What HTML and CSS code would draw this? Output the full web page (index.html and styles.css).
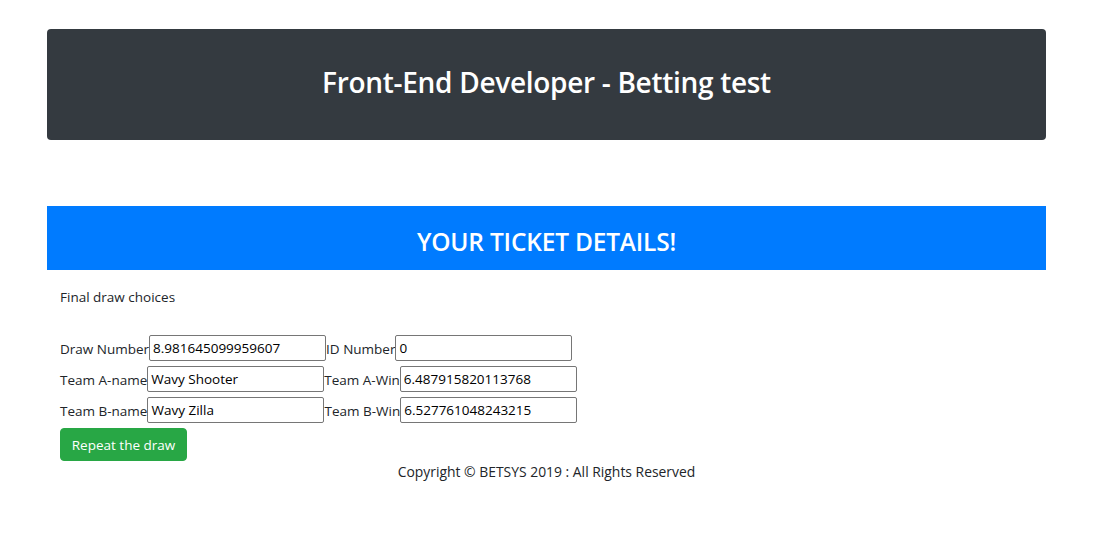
FILE: index.html
```html
<!DOCTYPE html>
<html>
<head>
<meta charset="utf-8">
<link rel="stylesheet" href="styles.css">
</head>
<body>
<div class="container">
  <header class="jumbo">
    <h1>Front-End Developer - Betting test</h1>
  </header>
  <section class="ticket">
    <div class="ticket-head"><h2>YOUR TICKET DETAILS!</h2></div>
    <div class="ticket-body">
      <p class="intro">Final draw choices</p>
      <div class="row"><label>Draw Number</label><input type="text" value="8.981645099959607"><label>ID Number</label><input type="text" value="0"></div>
      <div class="row"><label>Team A-name</label><input type="text" value="Wavy Shooter"><label>Team A-Win</label><input type="text" value="6.487915820113768"></div>
      <div class="row"><label>Team B-name</label><input type="text" value="Wavy Zilla"><label>Team B-Win</label><input type="text" value="6.527761048243215"></div>
      <button class="btn">Repeat the draw</button>
      <p class="copy">Copyright © BETSYS 2019 : All Rights Reserved</p>
    </div>
  </section>
</div>
</body>
</html>
```

FILE: styles.css
```css
* { box-sizing: border-box; }
body {
  margin: 0;
  font-family: "Open Sans", "Noto Sans", sans-serif;
  color: #212529;
  background: #fff;
}
.container {
  width: 999px;
  margin: 0 0 0 47px;
  padding-top: 29px;
}
.jumbo {
  background: #343a40;
  border-radius: 4px;
  height: 111px;
  padding-bottom: 6px;
  display: flex;
  align-items: center;
  justify-content: center;
}
.jumbo h1 {
  margin: 0;
  color: #fff;
  font-size: 28px;
  font-weight: 600;
  letter-spacing: -0.3px;
}
.ticket { margin-top: 66px; }
.ticket-head {
  background: #007bff;
  height: 64px;
  padding-top: 7px;
  display: flex;
  align-items: center;
  justify-content: center;
}
.ticket-head h2 {
  margin: 0;
  color: #fff;
  font-size: 24.5px;
  font-weight: 600;
  letter-spacing: -0.2px;
}
.ticket-body {
  padding: 0 13px;
  font-size: 13.5px;
}
.intro {
  margin: 18px 0 28px;
  line-height: 19px;
}
.row {
  display: flex;
  align-items: center;
  height: 26px;
  margin-bottom: 5px;
}
.row label { white-space: nowrap; padding-top: 1px; }
.row input {
  width: 177px;
  height: 26px;
  border: 1px solid #767676;
  border-radius: 2px;
  padding: 1px 3px;
  font-family: inherit;
  font-size: 13.5px;
  color: #000;
}
.btn {
  background: #28a745;
  color: #fff;
  border: 1px solid #28a745;
  border-radius: 4px;
  height: 33px;
  width: 127px;
  padding: 0;
  font-family: inherit;
  font-size: 13.5px;
}
.copy {
  margin: 1px 0 0;
  text-align: center;
  line-height: 20px;
  font-size: 13.9px;
}
```
